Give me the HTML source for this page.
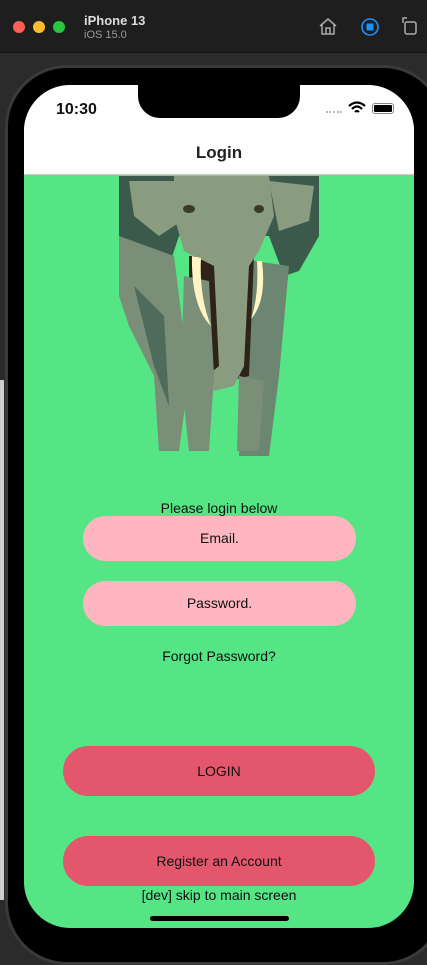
<!DOCTYPE html>
<html><head><style>
*{margin:0;padding:0;box-sizing:border-box}
body{width:427px;height:933px;overflow:hidden;background:#2b2b2b;font-family:"Liberation Sans",sans-serif;position:relative}
.top{position:absolute;left:0;top:0;width:427px;height:53px;background:#1e1e1e;border-bottom:1px solid #111}
.dot{position:absolute;top:21px;width:12px;height:12px;border-radius:50%}
.frame{position:absolute;left:5px;top:65px;width:440px;height:900px;border-radius:62px;background:#000;border:3px solid #3a3a3a}
.screen{position:absolute;left:24px;top:85px;width:390px;height:843px;border-radius:46px;overflow:hidden;background:#55e585}
.nav{position:absolute;left:0;top:0;width:390px;height:90px;background:#fff;border-bottom:1px solid #ccc}
.notch{position:absolute;left:114px;top:0;width:162px;height:33px;background:#000;border-radius:0 0 22px 22px}
.t{position:absolute;width:390px;left:0;text-align:center;font-size:14px;color:#111}
.in{position:absolute;left:59px;width:273px;height:45px;border-radius:23px;background:#ffb6c1;font-size:14px;text-align:center;line-height:45px;color:#111}
.btn{position:absolute;left:39px;width:312px;height:50px;border-radius:25px;background:#e3566c;font-size:14px;text-align:center;line-height:50px;color:#111}
</style></head><body>
<div class="top">
<div class="dot" style="left:13px;background:#fe5f57"></div>
<div class="dot" style="left:33px;background:#febc2e"></div>
<div class="dot" style="left:53px;background:#28c840"></div>
<div style="position:absolute;left:84px;top:13px;color:#ddd;font-weight:bold;font-size:13px">iPhone 13</div>
<div style="position:absolute;left:84px;top:29px;color:#999;font-size:11px">iOS 15.0</div>
<svg style="position:absolute;left:318px;top:16px" width="20" height="20" viewBox="0 0 20 20"><path d="M2 10 L10 3 L18 10 M4 8 V18 H16 V8 M8 18 V12 H12 V18" fill="none" stroke="#aaa" stroke-width="1.5"/></svg>
<svg style="position:absolute;left:360px;top:17px" width="20" height="20"><circle cx="10" cy="10" r="8" fill="none" stroke="#1e90ff" stroke-width="1.6"/><rect x="6.5" y="6.5" width="7" height="7" rx="1" fill="#1e90ff"/></svg>
<svg style="position:absolute;left:400px;top:15px" width="20" height="24"><rect x="5" y="7" width="11" height="12" rx="2" fill="none" stroke="#aaa" stroke-width="1.5"/><path d="M3 8 V3 H7" fill="none" stroke="#aaa" stroke-width="1.5"/></svg>
</div>
<div style="position:absolute;left:0;top:380px;width:4px;height:520px;background:#cfcfcf"></div>
<div class="frame"></div>
<div class="screen">
<div class="nav">
<div class="notch"></div>
<div style="position:absolute;left:32px;top:16px;font-size:16px;font-weight:bold;color:#111">10:30</div>
<div style="position:absolute;left:302px;top:26px;width:16px;height:2px;border-top:2px dotted #bbb"></div>
<svg style="position:absolute;left:324px;top:16px" width="18" height="13" viewBox="0 0 18 13"><path d="M1 5 Q9 -2 17 5 M4 8 Q9 3 14 8 M7 11 Q9 9 11 11" fill="none" stroke="#000" stroke-width="2.2"/></svg>
<div style="position:absolute;left:348px;top:18px;width:22px;height:11px;border:1.5px solid #888;border-radius:3px;padding:1px"><div style="width:100%;height:100%;background:#000;border-radius:1px"></div></div>
<div style="position:absolute;left:0;top:58px;width:390px;text-align:center;font-size:17px;font-weight:bold;color:#222">Login</div>
</div>
<svg style="position:absolute;left:95px;top:91px" width="200" height="285" viewBox="0 0 200 285">
<path d="M0 0 H200 V60 L180 95 L165 100 L150 60 L60 60 L50 90 L0 120 Z" fill="#3c5a4c"/>
<path d="M10 5 L60 5 L70 40 L40 60 L15 40 Z M150 5 L195 10 L190 45 L160 55 Z" fill="#8a9c80"/>
<path d="M0 60 L55 80 L70 200 L60 275 L40 275 L35 200 L10 150 L0 120 Z" fill="#7b8e78"/>
<path d="M15 110 L45 140 L50 230 L35 190 Z" fill="#4e6b5c"/>
<path d="M135 85 L170 90 L160 200 L150 280 L120 280 L125 200 Z" fill="#6d8672"/>
<path d="M70 80 L135 80 L130 200 L110 205 L85 200 L70 200 Z" fill="#2f2218"/>
<path d="M55 0 H150 L155 40 L140 75 L130 90 L125 190 L115 210 L95 215 L88 200 L100 190 L95 90 L65 75 L55 40 Z" fill="#8a9c80"/>
<path d="M65 100 L90 105 L95 200 L90 275 L70 275 L62 200 Z" fill="#7b8e78"/>
<path d="M120 200 L145 205 L140 275 L118 275 Z" fill="#7b8e78"/>
<path d="M73 80 Q72 130 92 150 Q80 120 82 82 Z M143 85 Q148 125 132 143 Q140 120 138 85 Z" fill="#fff4c4"/>
<ellipse cx="70" cy="33" rx="6" ry="4" fill="#3a3a2a"/><ellipse cx="140" cy="33" rx="5" ry="4" fill="#3a3a2a"/>
</svg>
<div class="t" style="top:415px">Please login below</div>
<div class="in" style="top:431px">Email.</div>
<div class="in" style="top:496px">Password.</div>
<div class="t" style="top:563px">Forgot Password?</div>
<div class="btn" style="top:661px">LOGIN</div>
<div class="btn" style="top:751px">Register an Account</div>
<div class="t" style="top:802px">[dev] skip to main screen</div>
<div style="position:absolute;left:126px;top:831px;width:139px;height:5px;border-radius:3px;background:#000"></div>
</div>
</body></html>
